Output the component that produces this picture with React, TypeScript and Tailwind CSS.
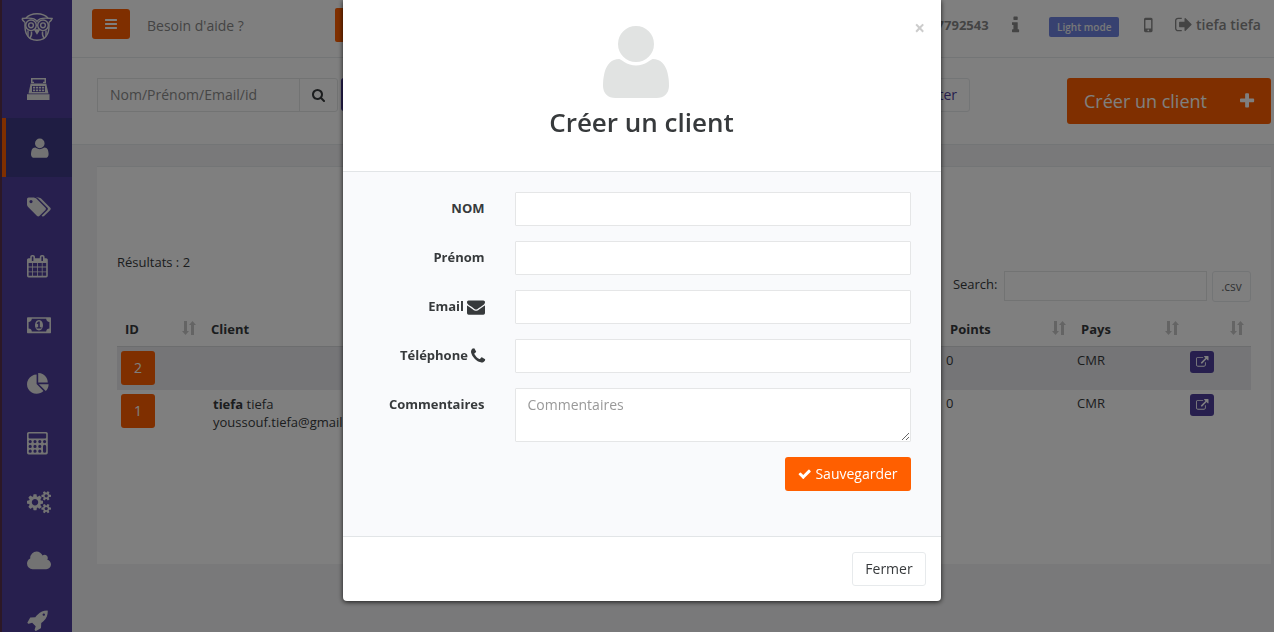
import React from "react";

type Glyph = { w: number; x?: number; d: string; up?: boolean };

const G: Record<string, Glyph> = {
  user: {
    w: 1408,
    up: true,
    d: "M1408 131q0-120-73-189.5t-194-69.5h-874q-121 0-194 69.5t-73 189.5q0 53 3.5 103.5t14 109t26.5 108.5t43 97.5t62 81t85.5 53.5t111.5 20q9 0 42-21.5t74.5-48t108-48t133.5-21.5t133.5 21.5t108 48t74.5 48t42 21.5q61 0 111.5-20t85.5-53.5t62-81t43-97.5t26.5-108.5t14-109t3.5-103.5zM1088 1024q0-159-112.5-271.5t-271.5-112.5t-271.5 112.5t-112.5 271.5t112.5 271.5t271.5 112.5t271.5-112.5t112.5-271.5z",
  },
  bars: {
    w: 1536,
    x: 128,
    d: "M1664 1344v128q0 26-19 45t-45 19h-1408q-26 0-45-19t-19-45v-128q0-26 19-45t45-19h1408q26 0 45 19t19 45zm0-512v128q0 26-19 45t-45 19h-1408q-26 0-45-19t-19-45v-128q0-26 19-45t45-19h1408q26 0 45 19t19 45zm0-512v128q0 26-19 45t-45 19h-1408q-26 0-45-19t-19-45v-128q0-26 19-45t45-19h1408q26 0 45 19t19 45z",
  },
  tags: {
    w: 1920,
    d: "M448 448q0-53-37.5-90.5t-90.5-37.5-90.5 37.5-37.5 90.5 37.5 90.5 90.5 37.5 90.5-37.5 37.5-90.5zm1067 576q0 53-37 90l-491 492q-39 37-91 37-53 0-90-37l-715-716q-38-37-64.5-101t-26.5-117v-416q0-52 38-90t90-38h416q53 0 117 26.5t102 64.5l715 714q37 39 37 91zm384 0q0 53-37 90l-491 492q-39 37-91 37-36 0-59-14t-53-45l470-470q37-37 37-90 0-52-37-91l-715-714q-38-38-102-64.5t-117-26.5h224q53 0 117 26.5t102 64.5l715 714q37 39 37 91z",
  },
  calendar: {
    w: 1664,
    x: 64,
    d: "M192 1664h288v-288h-288v288zm352 0h320v-288h-320v288zm-352-352h288v-320h-288v320zm352 0h320v-320h-320v320zm-352-384h288v-288h-288v288zm736 736h320v-288h-320v288zm-384-736h320v-288h-320v288zm768 736h288v-288h-288v288zm-384-352h320v-320h-320v320zm-352-864v-288q0-13-9.5-22.5t-22.5-9.5h-64q-13 0-22.5 9.5t-9.5 22.5v288q0 13 9.5 22.5t22.5 9.5h64q13 0 22.5-9.5t9.5-22.5zm736 864h288v-320h-288v320zm-384-384h320v-288h-320v288zm384 0h288v-288h-288v288zm32-480v-288q0-13-9.5-22.5t-22.5-9.5h-64q-13 0-22.5 9.5t-9.5 22.5v288q0 13 9.5 22.5t22.5 9.5h64q13 0 22.5-9.5t9.5-22.5zm384-64v1280q0 52-38 90t-90 38h-1408q-52 0-90-38t-38-90v-1280q0-52 38-90t90-38h128v-96q0-66 47-113t113-47h64q66 0 113 47t47 113v96h384v-96q0-66 47-113t113-47h64q66 0 113 47t47 113v96h128q52 0 90 38t38 90z",
  },
  money: {
    w: 1920,
    d: "M768 1152h384v-96h-128v-448h-114l-148 137 77 80q42-37 55-57h2v288h-128v96zm512-256q0 70-21 142t-59.5 134-101.5 101-138 39-138-39-101.5-101-59.5-134-21-142 21-142 59.5-134 101.5-101 138-39 138 39 101.5 101 59.5 134 21 142zm512 256v-512q-106 0-181-75t-75-181h-1152q0 106-75 181t-181 75v512q106 0 181 75t75 181h1152q0-106 75-181t181-75zm128-832v1152q0 26-19 45t-45 19h-1792q-26 0-45-19t-19-45v-1152q0-26 19-45t45-19h1792q26 0 45 19t19 45z",
  },
  pie: {
    w: 1792,
    d: "M768 890l546 546q-106 108-247.5 168t-298.5 60q-209 0-385.5-103t-279.5-279.5-103-385.5 103-385.5 279.5-279.5 385.5-103v762zm187 6h773q0 157-60 298.5t-168 247.5zm709-128h-768v-768q209 0 385.5 103t279.5 279.5 103 385.5z",
  },
  calculator: {
    w: 1664,
    d: "M128 0h1408q52 0 90 38t38 90v1536q0 52-38 90t-90 38h-1408q-52 0-90-38t-38-90v-1536q0-52 38-90t90-38zM192 128q-64 0-64 64v256q0 64 64 64h1280q64 0 64-64v-256q0-64-64-64zM128 768a128 128 0 1 0 256 0a128 128 0 1 0-256 0zM512 768a128 128 0 1 0 256 0a128 128 0 1 0-256 0zM896 768a128 128 0 1 0 256 0a128 128 0 1 0-256 0zM1280 768a128 128 0 1 0 256 0a128 128 0 1 0-256 0zM128 1152a128 128 0 1 0 256 0a128 128 0 1 0-256 0zM512 1152a128 128 0 1 0 256 0a128 128 0 1 0-256 0zM896 1152a128 128 0 1 0 256 0a128 128 0 1 0-256 0zM128 1536a128 128 0 1 0 256 0a128 128 0 1 0-256 0zM512 1536a128 128 0 1 0 256 0a128 128 0 1 0-256 0zM896 1536a128 128 0 1 0 256 0a128 128 0 1 0-256 0zM1280 1152a128 128 0 0 1 256 0v384a128 128 0 0 1-256 0z",
  },
  cogs: {
    w: 1920,
    d: "M896 896q0-106-75-181t-181-75-181 75-75 181 75 181 181 75 181-75 75-181zm768 512q0-52-38-90t-90-38-90 38-38 90q0 53 37.5 90.5t90.5 37.5 90.5-37.5 37.5-90.5zm0-1024q0-52-38-90t-90-38-90 38-38 90q0 53 37.5 90.5t90.5 37.5 90.5-37.5 37.5-90.5zm-384 421v185q0 10-7 19.5t-16 10.5l-155 24q-11 35-32 76 34 48 90 115 7 11 7 20 0 12-7 19-23 30-82.5 89.5t-78.5 59.5q-11 0-21-7l-115-90q-37 19-77 31-11 108-23 155-7 24-30 24h-186q-11 0-20-7.5t-10-17.5l-23-153q-34-10-75-31l-118 89q-7 7-20 7-11 0-21-8-144-133-144-160 0-9 7-19 10-14 41-53t47-61q-23-44-35-82l-152-24q-10-1-17-9.5t-7-19.5v-185q0-10 7-19.5t16-10.5l155-24q11-35 32-76-34-48-90-115-7-11-7-20 0-12 7-20 22-30 82-89t79-59q11 0 21 7l115 90q34-18 77-32 11-108 23-154 7-24 30-24h186q11 0 20 7.5t10 17.5l23 153q34 10 75 31l118-89q8-7 20-7 11 0 21 8 144 133 144 160 0 8-7 19-12 16-42 54t-45 60q23 48 34 82l152 23q10 2 17 10.5t7 19.5zm640 533v140q0 16-149 31-12 27-30 52 51 113 51 138 0 4-4 7-122 71-124 71-8 0-46-47t-52-68q-20 2-30 2t-30-2q-14 21-52 68t-46 47q-2 0-124-71-4-3-4-7 0-25 51-138-18-25-30-52-149-15-149-31v-140q0-16 149-31 13-29 30-52-51-113-51-138 0-4 4-7 4-2 35-20t59-34 30-16q8 0 46 46.5t52 67.5q20-2 30-2t30 2q51-71 92-112l6-2q4 0 124 70 4 3 4 7 0 25-51 138 17 23 30 52 149 15 149 31zm0-1024v140q0 16-149 31-12 27-30 52 51 113 51 138 0 4-4 7-122 71-124 71-8 0-46-47t-52-68q-20 2-30 2t-30-2q-14 21-52 68t-46 47q-2 0-124-71-4-3-4-7 0-25 51-138-18-25-30-52-149-15-149-31v-140q0-16 149-31 13-29 30-52-51-113-51-138 0-4 4-7 4-2 35-20t59-34 30-16q8 0 46 46.5t52 67.5q20-2 30-2t30 2q51-71 92-112l6-2q4 0 124 70 4 3 4 7 0 25-51 138 17 23 30 52 149 15 149 31z",
  },
  cloud: {
    w: 1920,
    d: "M1920 1152q0 159-112.5 271.5t-271.5 112.5h-1088q-185 0-316.5-131.5t-131.5-316.5q0-132 71-241.5t187-163.5q-2-28-2-43 0-212 150-362t362-150q158 0 286.5 88t187.5 230q70-62 166-62 106 0 181 75t75 181q0 75-41 138 129 30 213 134.5t84 239.5z",
  },
  rocket: {
    w: 1664,
    d: "M1440 448q0-40-28-68t-68-28-68 28-28 68 28 68 68 28 68-28 28-68zm224-288q0 249-75.5 430.5t-253.5 360.5q-81 80-195 176l-20 379q-2 16-16 26l-384 224q-7 4-16 4-12 0-23-9l-64-64q-13-14-8-32l85-276-281-281-276 85q-3 1-9 1-14 0-23-9l-64-64q-17-19-5-39l224-384q10-14 26-16l379-20q96-114 176-195 188-187 358-258t431-71q14 0 24 9.5t10 22.5z",
  },
  signOut: {
    w: 1664,
    d: "M640 1440q0 4 1 20t.5 26.5-3 23.5-10 19.5-20.5 6.5h-320q-119 0-203.5-84.5t-84.5-203.5v-704q0-119 84.5-203.5t203.5-84.5h320q13 0 22.5 9.5t9.5 22.5q0 4 1 20t.5 26.5-3 23.5-10 19.5-20.5 6.5h-320q-66 0-113 47t-47 113v704q0 66 47 113t113 47h312l11.5 1 11.5 3 8 5.5 7 9 2 13.5zm928-544q0 26-19 45l-544 544q-19 19-45 19t-45-19-19-45v-288h-448q-26 0-45-19t-19-45v-384q0-26 19-45t45-19h448v-288q0-26 19-45t45-19 45 19l544 544q19 19 19 45z",
  },
  info: {
    w: 640,
    x: 576,
    d: "M1216 1344v128q0 26-19 45t-45 19h-512q-26 0-45-19t-19-45v-128q0-26 19-45t45-19h64v-384h-64q-26 0-45-19t-19-45v-128q0-26 19-45t45-19h384q26 0 45 19t19 45v576h64q26 0 45 19t19 45zm-128-1152v192q0 26-19 45t-45 19h-256q-26 0-45-19t-19-45v-192q0-26 19-45t45-19h256q26 0 45 19t19 45z",
  },
  mobile: {
    w: 768,
    d: "M128 256h512q52 0 90 38t38 90v1024q0 52-38 90t-90 38h-512q-52 0-90-38t-38-90v-1024q0-52 38-90t90-38zM128 480v704q0 32 32 32h448q32 0 32-32v-704q0-32-32-32h-448q-32 0-32 32zM304 1376a80 80 0 1 0 160 0a80 80 0 1 0-160 0z",
  },
  search: {
    w: 1664,
    x: 64,
    d: "M1216 832q0-185-131.5-316.5t-316.5-131.5-316.5 131.5-131.5 316.5 131.5 316.5 316.5 131.5 316.5-131.5 131.5-316.5zm512 832q0 52-38 90t-90 38q-54 0-90-38l-343-342q-179 124-399 124-143 0-273.5-55.5t-225-150-150-225-55.5-273.5 55.5-273.5 150-225 225-150 273.5-55.5 273.5 55.5 225 150 150 225 55.5 273.5q0 220-124 399l343 343q37 37 37 90z",
  },
  plus: {
    w: 1408,
    x: 192,
    d: "M1600 736v192q0 40-28 68t-68 28h-416v416q0 40-28 68t-68 28h-192q-40 0-68-28t-28-68v-416h-416q-40 0-68-28t-28-68v-192q0-40 28-68t68-28h416v-416q0-40 28-68t68-28h192q40 0 68 28t28 68v416h416q40 0 68 28t28 68z",
  },
  external: {
    w: 1792,
    d: "M1408 928v320q0 119-84.5 203.5t-203.5 84.5h-832q-119 0-203.5-84.5t-84.5-203.5v-832q0-119 84.5-203.5t203.5-84.5h704q14 0 23 9t9 23v64q0 14-9 23t-23 9h-704q-66 0-113 47t-47 113v832q0 66 47 113t113 47h832q66 0 113-47t47-113v-320q0-14 9-23t23-9h64q14 0 23 9t9 23zm384-864v512q0 26-19 45t-45 19-45-19l-176-176-652 652q-10 10-23 10t-23-10l-114-114q-10-10-10-23t10-23l652-652-176-176q-19-19-19-45t19-45 45-19h512q26 0 45 19t19 45z",
  },
  check: {
    w: 1792,
    x: 40,
    d: "M1671 566q0 40-28 68l-724 724-136 136q-28 28-68 28t-68-28l-136-136-362-362q-28-28-28-68t28-68l136-136q28-28 68-28t68 28l294 295 656-657q28-28 68-28t68 28l136 136q28 28 28 68z",
  },
  envelope: {
    w: 1792,
    d: "M1792 710v794q0 66-47 113t-113 47h-1472q-66 0-113-47t-47-113v-794q44 49 101 87 362 246 497 345 57 42 92.5 65.5t94.5 48 110 24.5h2q51 0 110-24.5t94.5-48 92.5-65.5q170-123 498-345 57-39 100-87zm0-294q0 79-49 151t-122 123q-376 261-468 325-10 7-42.5 31t-54 38.5-52 32.5-57.5 27-50 9h-2q-23 0-50-9t-57.5-27-52-32.5-54-38.5-42.5-31q-91-64-262-182.5t-205-142.5q-62-42-117-115.5t-55-136.5q0-78 41.5-130t118.5-52h1472q65 0 112.5 47t47.5 113z",
  },
  phone: {
    w: 1408,
    x: 192,
    d: "M1600 1240q0 27-10 70.5t-21 68.5q-21 50-122 106-94 51-186 51-27 0-52.5-3.5t-57.5-12.5-47.5-14.5-55.5-20.5-49-18q-98-35-175-83-128-79-264.5-215.5t-215.5-264.5q-48-77-83-175-3-9-18-49t-20.5-55.5-14.5-47.5-12.5-57.5-3.5-52.5q0-92 51-186 56-101 106-122 25-11 68.5-21t70.5-10q14 0 21 3 18 6 53 76 11 19 30 54t35 63.5 31 53.5q3 4 17.5 25t21.5 35.5 7 28.5q0 20-28.5 50t-62 55-62 53-28.5 46q0 9 5 22.5t8.5 20.5 14 24 11.5 19q76 137 174 235t235 174q2 1 19 11.5t24 14 20.5 8.5 22.5 5q18 0 46-28.5t53-62 55-62 50-28.5q14 0 28.5 7t35.5 21.5 25 17.5q25 15 53.5 31t63.5 35 54 30q70 35 76 53 3 7 3 21z",
  },
};

function Icon({ name, size, className = "" }: { name: string; size: number; className?: string }) {
  const g = G[name];
  return (
    <svg
      width={(g.w * size) / 1792}
      height={size}
      viewBox={`${g.x ?? 0} 0 ${g.w} 1792`}
      fill="currentColor"
      fillRule="evenodd"
      className={`shrink-0 overflow-visible ${className}`}
    >
      <path d={g.d} transform={g.up ? "matrix(1 0 0 -1 0 1536)" : undefined} />
    </svg>
  );
}

function Owl() {
  return (
    <svg width="32" height="28" viewBox="0 0 32 28" fill="none" stroke="currentColor" strokeWidth="1.4">
      <path d="M5 5C7.500 2.200 11.500.7 16 .7S24.500 2.200 27 5" />
      <path d="M.9 5.500c4.500-.5 9.500-.6 12 .4 1.500.6 2.500 1.500 3.100 2.600.6-1.100 1.600-2 3.100-2.600 2.500-1 7.500-.9 12-.4-.5 1.700-1.500 3-3.200 4M.9 5.500c.5 1.700 1.500 3 3.200 4" />
      <circle cx="10" cy="12.300" r="5.300" />
      <circle cx="22" cy="12.300" r="5.300" />
      <circle cx="10" cy="12.300" r="2.400" />
      <circle cx="22" cy="12.300" r="2.400" />
      <path d="M13.800 17L16 20.500l2.200-3.500z" fill="currentColor" />
      <path d="M4.100 9.500c-.8 9 1.600 17.800 11.900 17.800S28.700 18.500 27.900 9.500" />
      <path d="M7 17.500v6M10.500 18.500c.4 3-.2 5-2 7M25 17.500v6M21.500 18.500c-.4 3 .2 5 2 7" />
    </svg>
  );
}

function Register() {
  return (
    <svg width="23" height="22" viewBox="0 0 23 22" fill="currentColor" fillRule="evenodd" className="shrink-0">
      <path d="M4 0h15v5h-3V3.800h1.500V1.500h-12v2.300H7V5H4zM3.600 5.500h15.600L21.500 15.500h-20zM5 8v6h13V8z" />
      <path d="M6 8.800h2.200v1.700H6zM9 8.800h2.200v1.700H9zM12 8.800h2.200v1.700H12zM15 8.800h2.200v1.700H15zM6 11.500h2.200v1.700H6zM9 11.500h2.200v1.700H9zM12 11.500h2.200v1.700H12zM15 11.500h2.200v1.700H15zM0 16.200h22.500V22H0z" />
    </svg>
  );
}

function Sort() {
  return (
    <svg width="14" height="14" viewBox="0 0 14 14" fill="#c9c9c9" className="mb-[3px] shrink-0">
      <path d="M2 0h3v10h2L3.500 14 0 10h2zM9 14h3V4h2L10.500 0 7 4h2z" />
    </svg>
  );
}

const nav = ["register", "user", "tags", "calendar", "money", "pie", "calculator", "cogs", "cloud", "rocket"];

function Sidebar() {
  return (
    <aside className="flex h-[632px] w-[72px] shrink-0 flex-col overflow-hidden border-l-2 border-[#58304c] bg-[#4e3f9d] text-[#e6e6e6]">
      <div className="flex h-[59px] shrink-0 justify-center pt-[13px]">
        <Owl />
      </div>
      {nav.map((n) => (
        <div
          key={n}
          className={
            n === "user"
              ? "flex h-[59px] shrink-0 items-center border-l-4 border-[#ff5f00] bg-[#3e3a86] pl-[25px] pt-0.5"
              : n === "register"
                ? "flex h-[59px] shrink-0 items-center pl-[25px]"
                : "flex h-[59px] shrink-0 items-center pl-[25px] pt-0.5"
          }
        >
          {n === "register" ? <Register /> : <Icon name={n} size={22.4} />}
        </div>
      ))}
    </aside>
  );
}

function Topbar() {
  return (
    <header className="flex h-[58px] border-b border-[#e7eaec] bg-white text-[#888]">
      <div className="ml-5 mt-[9px] flex h-[30px] w-[38px] items-center justify-center rounded-[3px] bg-[#ff5f00] text-white">
        <Icon name="bars" size={14} />
      </div>
      <span className="ml-[17px] mt-4 text-sm leading-5">Besoin d'aide ?</span>
      <div className="ml-[91px] mt-2 h-[34px] w-[140px] shrink-0 rounded-[2px] bg-[#ff5f00]" />
      <div className="ml-auto flex items-start justify-end pr-[13px]">
        <span className="mt-[15px] text-[13px] font-bold leading-5">7792543</span>
        <Icon name="info" size={20} className="ml-[23px] mt-[15px]" />
        <span className="ml-[30px] mt-[17px] h-5 w-[70px] rounded-[2px] bg-[#6f83e0] pl-px text-center text-[10px] font-semibold leading-5 text-[#f0f0f0]">
          Light mode
        </span>
        <Icon name="mobile" size={20} className="ml-[25px] mt-[15px]" />
        <Icon name="signOut" size={19} className="ml-[22.5px] mt-[15px]" />
        <span className="ml-[3.5px] mt-[15px] whitespace-nowrap text-sm font-semibold leading-5">tiefa tiefa</span>
      </div>
    </header>
  );
}

function FilterBar() {
  return (
    <div className="flex h-[87px] items-start border-b border-[#e7eaec] bg-white pl-[25px] pr-[3px] pt-5 text-sm">
      <div className="flex h-[34px] w-[203px] items-center border border-[#e5e6e7] pl-3 text-[#8c8c8c]">Nom/Prénom/Email/id</div>
      <div className="-ml-px flex h-[34px] w-[39px] items-center justify-center rounded-r-[3px] border border-[#e5e6e7] text-[#373a3c]">
        <Icon name="search" size={14} />
      </div>
      <div className="ml-[3px] h-[33px] w-20 rounded-[3px] bg-[#4e3f9d]" />
      <div className="ml-auto mr-[97px] flex h-[34px] items-center rounded-[3px] border border-[#e7eaec] px-3 text-[#4e3f9d]">Exporter</div>
      <div className="flex h-[46px] w-[204px] items-center justify-between rounded-[3px] bg-[#ff5f00] px-[17px] text-lg text-white">
        Créer un client
        <Icon name="plus" size={18} />
      </div>
    </div>
  );
}

function Row({ id, striped, children }: { id: number; striped?: boolean; children?: React.ReactNode }) {
  return (
    <div className={striped ? "flex h-[43px] bg-[#eaeaef] leading-[18px]" : "flex h-[43px] leading-[18px]"}>
      <div className="ml-1 mt-1 flex h-[34px] w-[34px] items-center justify-center rounded-[3px] bg-[#ff5f00] text-sm text-white">{id}</div>
      <div className="ml-[58px] w-[733px] pt-[5px]">{children}</div>
      <div className="w-[131px] pt-1">0</div>
      <div className="w-[113px] pt-1">CMR</div>
      <div className="mt-1 flex h-[22px] w-6 items-center justify-center rounded-[3px] bg-[#4e3f9d] text-white">
        <Icon name="external" size={12.5} />
      </div>
    </div>
  );
}

function Results() {
  return (
    <section className="ml-[25px] mr-[3px] mt-[21px] h-[398px] border-t border-[#e7eaec] bg-white px-5 pt-[85px] text-[13px] text-[#373a3c]">
      <div className="leading-5">Résultats : 2</div>
      <div className="-mt-px flex items-start justify-end">
        <span className="mt-[3px] leading-5">Search:</span>
        <div className="ml-[6.5px] h-[30px] w-[203px] border border-[#e5e6e7]" />
        <div className="ml-[5px] flex h-[31px] w-[39px] items-center justify-center rounded-[3px] border border-[#e7eaec] text-xs text-[#676a6c]">.csv</div>
      </div>
      <div className="mt-[9px] flex h-9 items-center border-b border-[#d9dadd] pl-2 pt-0.5 font-bold">
        <span className="w-[57px]">ID</span>
        <Sort />
        <span className="ml-[15px] w-[739px]">Client</span>
        <span className="w-[102px]">Points</span>
        <Sort />
        <span className="ml-[15px] w-[84px]">Pays</span>
        <Sort />
        <span className="w-[51px]" />
        <Sort />
      </div>
      <Row id={2} striped />
      <Row id={1}>
        <b>tiefa</b> tiefa
        <br />
        youssouf.tiefa@gmail.com
      </Row>
    </section>
  );
}

function Field({ label, icon }: { label: string; icon?: string }) {
  return (
    <div className="mb-[15px] flex h-[34px] items-center">
      <label className="mr-[30.5px] flex w-[141.5px] items-center justify-end gap-[3px] text-[13px] font-bold">
        {label}
        {icon && <Icon name={icon} size={18} className="-mr-[0.5px]" />}
      </label>
      <input className="h-[34px] w-[396px] rounded-[1px] border border-[#e5e6e7] bg-white" />
    </div>
  );
}

function Modal() {
  return (
    <div className="fixed inset-0 flex items-start bg-black/50 pl-[343px]">
      <div className="h-[601px] w-[598px] overflow-hidden rounded-b-[4px] bg-white text-[#373a3c] shadow-[0_1px_5px_rgba(0,0,0,0.8)]">
        <div className="relative flex h-[171px] flex-col items-center pr-px pt-5">
          <Icon name="user" size={84} className="mr-3 text-[#e1e3e2]" />
          <h4 className="text-[26px] font-semibold leading-9">Créer un client</h4>
          <button className="absolute right-4 top-[18px] text-[19px] font-bold leading-[21px] text-[#ccc]">×</button>
        </div>
        <div className="h-[366px] border-y border-[#e2e5e7] bg-[#f9fafc] pt-5">
          <Field label="NOM" />
          <Field label="Prénom" />
          <Field label="Email" icon="envelope" />
          <Field label="Téléphone" icon="phone" />
          <div className="flex items-start">
            <label className="mr-[30.5px] w-[141.5px] pt-1.5 text-right text-[13px] font-bold leading-5">Commentaires</label>
            <textarea
              placeholder="Commentaires"
              className="h-[54px] w-[396px] rounded-[1px] border border-[#e5e6e7] bg-white px-[11.5px] py-1.5 text-sm leading-5 placeholder:text-[#999]"
            />
          </div>
          <div className="flex justify-end pr-[30px] pt-[15px]">
            <button className="flex h-[34px] w-[126px] items-center justify-center gap-[3px] rounded-[3px] bg-[#ff5f00] text-sm text-white">
              <Icon name="check" size={14} />
              Sauvegarder
            </button>
          </div>
        </div>
        <div className="flex justify-end pr-[15px] pt-[15px]">
          <button className="h-[34px] w-[74px] rounded-[3px] border border-[#e7eaec] bg-white text-sm">Fermer</button>
        </div>
      </div>
    </div>
  );
}

export default function App() {
  return (
    <div className="flex h-[632px] w-[1274px] overflow-hidden bg-[#f3f3f4] font-['Open_Sans',sans-serif]">
      <Sidebar />
      <main className="w-[1202px] shrink-0">
        <Topbar />
        <FilterBar />
        <Results />
      </main>
      <Modal />
    </div>
  );
}
